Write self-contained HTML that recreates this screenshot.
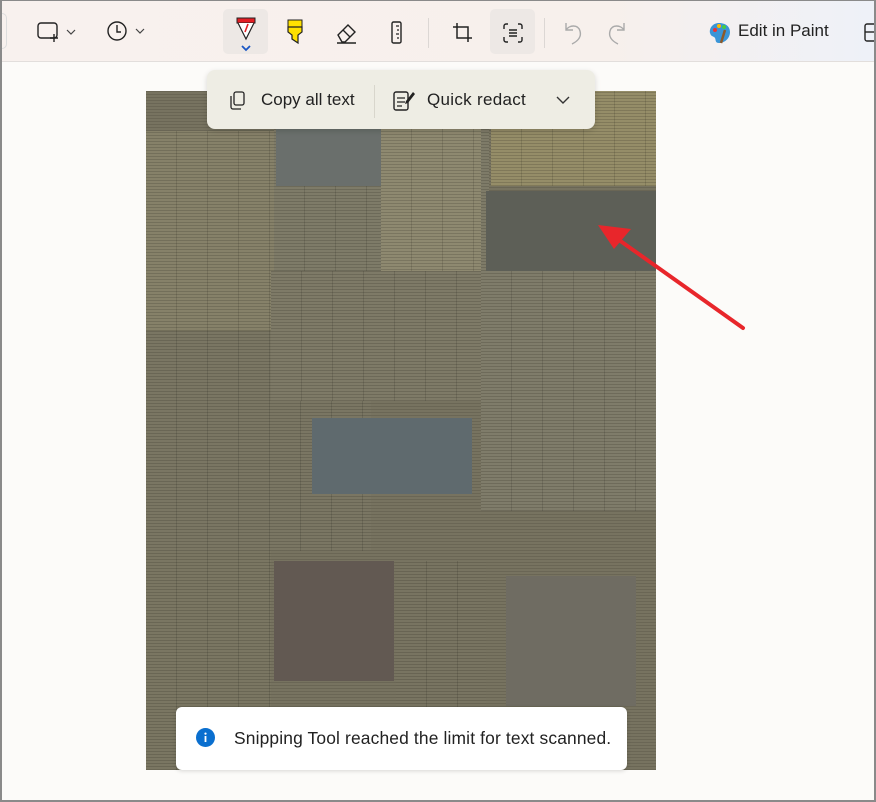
<!DOCTYPE html>
<html><head><meta charset="utf-8"><style>
*{margin:0;padding:0;box-sizing:border-box}
body{width:876px;height:802px;overflow:hidden;background:#fcfbf9;font-family:"Segoe UI","Liberation Sans",sans-serif;position:relative}
.win{position:absolute;left:0;top:0;width:876px;height:802px;border:2px solid #8a8a8a;border-top:1px solid #8a8a8a;border-right:2px solid #8a8a8a}
.tb{position:absolute;left:1px;top:1px;width:873px;height:61px;background:linear-gradient(90deg,#f8f1ee 0%,#f7f0ec 70%,#eef1f8 100%);border-bottom:1px solid #e2dedc}
.ic{position:absolute}
.sel{position:absolute;background:#ede8e5;border-radius:5px}
.sep{position:absolute;top:17px;width:1px;height:30px;background:#dcd7d4}
.img{position:absolute;left:146px;top:91px;width:510px;height:679px;overflow:hidden;background:#777360;background-image:repeating-linear-gradient(0deg,rgba(30,28,20,.15) 0 1px,transparent 1px 3px)}
.p{position:absolute;background-image:repeating-linear-gradient(0deg,rgba(30,28,20,.18) 0 1px,transparent 1px 3px),repeating-linear-gradient(90deg,transparent 0 30px,rgba(0,0,0,.12) 30px 31px)}
.pop{position:absolute;left:207px;top:70px;width:388px;height:59px;background:#eeede4;border-radius:8px;box-shadow:0 2px 6px rgba(0,0,0,.15);font-size:17px;color:#222}
.toast{position:absolute;left:176px;top:707px;width:451px;height:63px;background:#fff;border-radius:6px;box-shadow:0 1px 4px rgba(0,0,0,.15);font-size:17.4px;color:#222}
</style></head><body>
<div class="tb">
 <div style="position:absolute;left:-2px;top:12px;width:8px;height:36px;border:1px solid #ddd;border-left:none;border-radius:0 5px 5px 0"></div>
 <svg class="ic" style="left:35px;top:19px" width="44" height="24" viewBox="0 0 44 24"><rect x="2" y="3" width="19" height="15" rx="3" fill="none" stroke="#222" stroke-width="1.4"/><path d="M18 14v8M14 18h8" stroke="#222" stroke-width="1.4" fill="#f7f0ec"/><path d="M31 10l4 4 4-4" fill="none" stroke="#444" stroke-width="1.2"/></svg>
 <svg class="ic" style="left:105px;top:18px" width="44" height="26" viewBox="0 0 44 26"><circle cx="11" cy="12" r="9" fill="none" stroke="#222" stroke-width="1.4"/><path d="M11 6v7h4" fill="none" stroke="#222" stroke-width="1.4"/><path d="M30 10l4 4 4-4" fill="none" stroke="#444" stroke-width="1.2"/></svg>
 <div class="sel" style="left:222px;top:8px;width:45px;height:45px"></div>
 <svg class="ic" style="left:233px;top:12px" width="24" height="40" viewBox="0 0 24 40"><path d="M3 5h18v5H3z" fill="#e31e24" stroke="#222" stroke-width="1"/><path d="M4 10l8 16 8-16" fill="#fff" stroke="#222" stroke-width="1.2"/><path d="M14 11l-3 8" stroke="#e31e24" stroke-width="1.6"/><path d="M8 33l4 4 4-4" fill="none" stroke="#1a56c4" stroke-width="1.8"/></svg>
 <svg class="ic" style="left:283px;top:16px" width="24" height="30" viewBox="0 0 24 30"><path d="M4 3h14v7H4z" fill="#ffe100" stroke="#222" stroke-width="1"/><path d="M4 10h14v5l-4 3v8l-6-4v-4l-4-3z" fill="#ffe100" stroke="#222" stroke-width="1.2"/></svg>
 <svg class="ic" style="left:333px;top:19px" width="26" height="26" viewBox="0 0 26 26"><path d="M4 15l10-10 7 7-10 10H8z" fill="none" stroke="#222" stroke-width="1.4"/><path d="M9 10l7 7M3 23h19" stroke="#222" stroke-width="1.4"/></svg>
 <svg class="ic" style="left:386px;top:19px" width="20" height="26" viewBox="0 0 20 26"><rect x="5" y="2" width="9" height="21" rx="1.5" fill="none" stroke="#222" stroke-width="1.4"/><path d="M9 6h3M10 10h2M9 14h3M10 18h2" stroke="#222" stroke-width="1.2"/></svg>
 <div class="sep" style="left:427px"></div>
 <svg class="ic" style="left:450px;top:20px" width="24" height="24" viewBox="0 0 24 24"><path d="M6 2v15h15M2 6h15v15" fill="none" stroke="#222" stroke-width="1.5"/></svg>
 <div class="sel" style="left:489px;top:8px;width:45px;height:45px"></div>
 <svg class="ic" style="left:500px;top:20px" width="24" height="24" viewBox="0 0 24 24"><path d="M7 3H5a2 2 0 0 0-2 2v3M17 3h2a2 2 0 0 1 2 2v3M7 21H5a2 2 0 0 1-2-2v-3M17 21h2a2 2 0 0 0 2-2v-3M8 9h8M8 12h8M8 15h8" fill="none" stroke="#222" stroke-width="1.4"/></svg>
 <div class="sep" style="left:543px"></div>
 <svg class="ic" style="left:560px;top:19px" width="70" height="26" viewBox="0 0 70 26"><path d="M5 3v7h7M5 10c3-5 12-6 14 1 2 7-4 11-8 13" fill="none" stroke="#aaa" stroke-width="1.4"/><path d="M63 3v7h-7M63 10c-3-5-12-6-14 1-2 7 4 11 8 13" fill="none" stroke="#aaa" stroke-width="1.4"/></svg>
 <svg class="ic" style="left:707px;top:20px" width="24" height="24" viewBox="0 0 24 24"><path d="M11 2C5 2 1 7 2 12c1 4 4 3 5 5s0 5 4 5c6 0 11-5 11-11S17 2 11 2z" fill="#3a95d8"/><circle cx="7" cy="9" r="2" fill="#e33"/><circle cx="11" cy="5" r="2" fill="#fb0"/><circle cx="16" cy="6" r="2" fill="#4c4"/><path d="M17 9l-4 13" stroke="#8b5a2b" stroke-width="2.5"/></svg>
 <div style="position:absolute;left:737px;top:20px;font-size:17px;color:#222">Edit in Paint</div>
 <svg class="ic" style="left:862px;top:21px" width="14" height="22" viewBox="0 0 14 22"><rect x="2" y="2" width="14" height="17" rx="2" fill="none" stroke="#222" stroke-width="1.4"/><path d="M2 10h14" stroke="#222" stroke-width="1.4"/></svg>
</div>

<div class="img">
 <div class="p" style="left:0;top:40px;width:230px;height:200px;background-color:#868169"></div>
 <div class="p" style="left:0;top:240px;width:225px;height:220px;background-color:#7a7663"></div>
 <div class="p" style="left:128px;top:30px;width:215px;height:150px;background-color:#7e7b68"></div>
 <div style="position:absolute;left:130px;top:30px;width:140px;height:65px;background:#6a6f6c"></div>
 <div class="p" style="left:235px;top:30px;width:100px;height:170px;background-color:#8e8970"></div>
 <div class="p" style="left:345px;top:0;width:165px;height:95px;background-color:#958d68"></div>
 <div style="position:absolute;left:340px;top:100px;width:170px;height:80px;background:#5d5f57"></div>
 <div class="p" style="left:125px;top:180px;width:210px;height:130px;background-color:#7e7a67"></div>
 <div style="position:absolute;left:166px;top:327px;width:160px;height:76px;background:#5f6a6e"></div>
 <div class="p" style="left:335px;top:180px;width:175px;height:240px;background-color:#7f7c6a"></div>
 <div class="p" style="left:0;top:460px;width:125px;height:219px;background-color:#7a7662"></div>
 <div style="position:absolute;left:128px;top:470px;width:120px;height:120px;background:#625952"></div>
 <div class="p" style="left:250px;top:470px;width:90px;height:209px;background-color:#787461"></div>
 <div style="position:absolute;left:360px;top:485px;width:130px;height:130px;background:#6f6c62"></div>
</div>
<svg style="position:absolute;left:590px;top:215px" width="160" height="120" viewBox="0 0 160 120"><path d="M153 113L22 20" stroke="#e8262b" stroke-width="4" stroke-linecap="round"/><path d="M8 10l33 4-17 20z" fill="#e8262b"/></svg>

<div class="pop">
 <svg class="ic" style="left:20px;top:20px" width="20" height="22" viewBox="0 0 20 22"><rect x="7" y="2" width="10" height="13" rx="2" fill="none" stroke="#222" stroke-width="1.3"/><path d="M4 6v11a2 2 0 0 0 2 2h8" fill="none" stroke="#222" stroke-width="1.3"/></svg>
 <div style="position:absolute;left:54px;top:20px">Copy all text</div>
 <div style="position:absolute;left:167px;top:15px;width:1px;height:33px;background:#d8d6cc"></div>
 <svg class="ic" style="left:185px;top:18px" width="24" height="24" viewBox="0 0 24 24"><rect x="2" y="4" width="14" height="18" rx="2" fill="none" stroke="#222" stroke-width="1.4"/><path d="M5 10h8M5 14h8M5 18h5" stroke="#222" stroke-width="1.3"/><path d="M14 13l7-9 2 2-7 9-3 1z" fill="#222"/></svg>
 <div style="position:absolute;left:220px;top:20px;letter-spacing:.3px">Quick redact</div>
 <svg class="ic" style="left:348px;top:24px" width="16" height="12" viewBox="0 0 16 12"><path d="M2 3l6 6 6-6" fill="none" stroke="#333" stroke-width="1.4"/></svg>
</div>

<div class="toast">
 <svg class="ic" style="left:20px;top:21px" width="19" height="19" viewBox="0 0 19 19"><circle cx="9.5" cy="9.5" r="9.5" fill="#0a6fcf"/><rect x="8.6" y="8" width="1.8" height="6" fill="#fff"/><circle cx="9.5" cy="5.6" r="1.1" fill="#fff"/></svg>
 <div style="position:absolute;left:58px;top:21px;letter-spacing:.15px">Snipping Tool reached the limit for text scanned.</div>
</div>
<div class="win"></div>
</body></html>
